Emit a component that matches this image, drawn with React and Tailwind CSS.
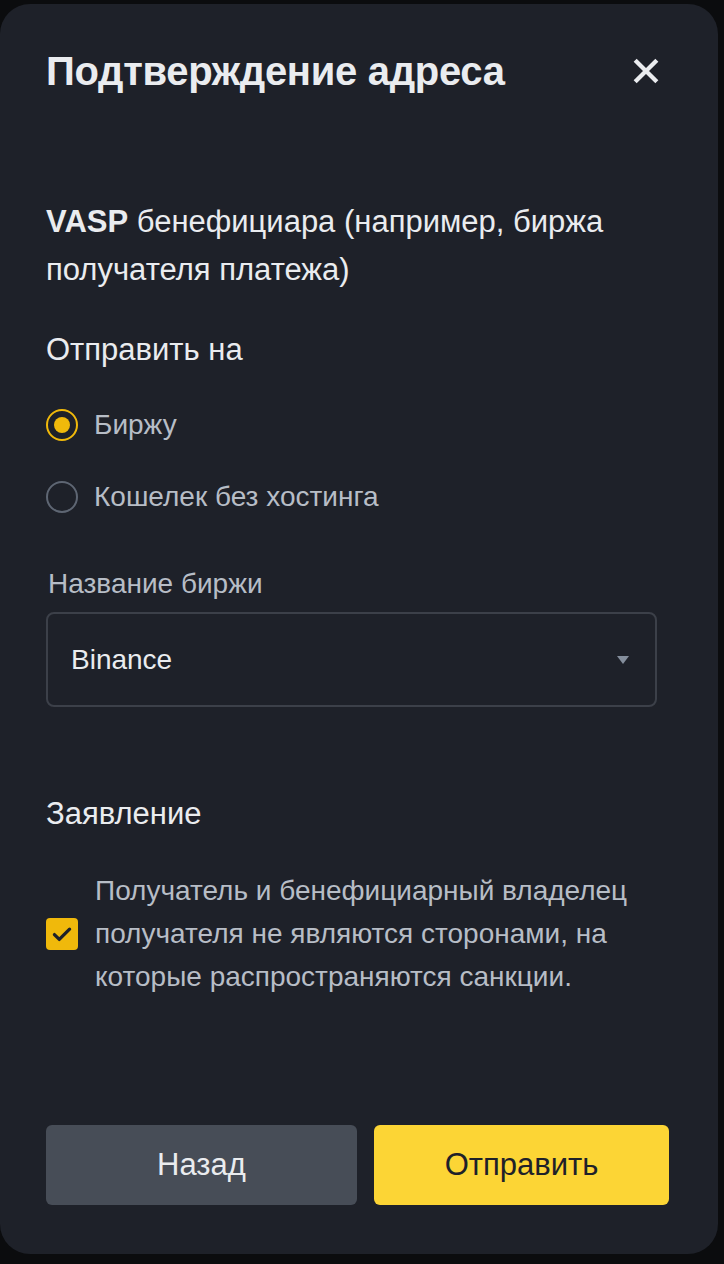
import React from 'react';

const App = () => {
  return (
    <div className="w-[724px] h-[1264px] bg-[#0b0c0e] overflow-hidden pt-[4px]" style={{ fontFamily: '"Liberation Sans", Arial, sans-serif' }}>
      <div className="w-[718px] h-[1250px] bg-[#1e2129] rounded-[30px] flex flex-col pl-[46px] pr-[49px]">
        {/* header */}
        <div className="flex items-center justify-between h-[136px] pb-[2px]">
          <h2 className="text-[40px] font-bold text-[#eaecef] tracking-[-0.3px]">Подтверждение адреса</h2>
          <button className="w-[40px] h-[40px] flex items-center justify-center text-[#eaecef] mr-[3px]">
            <svg width="32" height="32" viewBox="0 0 24 24" fill="none" stroke="currentColor" strokeWidth="3.2" strokeLinecap="square">
              <path d="M5 5l14 14M19 5L5 19" />
            </svg>
          </button>
        </div>

        <p className="pt-[58px] text-[31px] leading-[48px] text-[#eaecef]">
          <b className="font-bold">VASP</b> бенефициара (например, биржа получателя платежа)
        </p>

        <div className="mt-[38px] text-[31px] leading-[36px] text-[#eaecef]">Отправить на</div>

        <div className="mt-[39px] flex flex-col gap-[36px]">
          <label className="flex items-center gap-[16px] h-[36px]">
            <span className="w-[32px] h-[32px] rounded-full border-[2px] border-[#f0b90b] flex items-center justify-center">
              <span className="w-[16px] h-[16px] rounded-full bg-[#f0b90b]"></span>
            </span>
            <span className="text-[28px] text-[#b7bdc6]">Биржу</span>
          </label>
          <label className="flex items-center gap-[16px] h-[36px]">
            <span className="w-[32px] h-[32px] rounded-full border-[2px] border-[#5e6673]"></span>
            <span className="text-[28px] text-[#b7bdc6]">Кошелек без хостинга</span>
          </label>
        </div>

        <div className="mt-[52px] pl-[2px] text-[28px] leading-[34px] text-[#b7bdc6]">Название биржи</div>

        <div className="mt-[11px] w-[611px] h-[95px] rounded-[8px] border-[2px] border-[#3c4049] flex items-center justify-between pl-[23px] pr-[26px]">
          <span className="text-[28px] text-[#eaecef]">Binance</span>
          <svg width="12" height="8" viewBox="0 0 12 8">
            <path d="M0 0h12L6 8z" fill="#848e9c" />
          </svg>
        </div>

        <div className="mt-[89px] text-[31px] leading-[36px] text-[#eaecef]">Заявление</div>

        <div className="mt-[37px] flex items-center gap-[17px]">
          <span className="w-[32px] h-[32px] shrink-0 rounded-[4px] bg-[#f0b90b] flex items-center justify-center">
            <svg width="26" height="26" viewBox="0 0 24 24" fill="none" stroke="#1e2129" strokeWidth="3" strokeLinecap="round" strokeLinejoin="round">
              <path d="M5 12.5l4.5 4.5L19 7.5" />
            </svg>
          </span>
          <p className="text-[28px] leading-[43px] text-[#b7bdc6]">
            Получатель и бенефициарный владелец получателя не являются сторонами, на которые распространяются санкции.
          </p>
        </div>

        <div className="mt-auto mb-[49px] flex gap-[17px]">
          <button className="w-[311px] h-[80px] rounded-[6px] bg-[#474d57] text-[31px] text-[#eaecef]">Назад</button>
          <button className="w-[295px] h-[80px] rounded-[6px] bg-[#fcd535] text-[31px] text-[#1e2129]">Отправить</button>
        </div>
      </div>
    </div>
  );
};

export default App;
